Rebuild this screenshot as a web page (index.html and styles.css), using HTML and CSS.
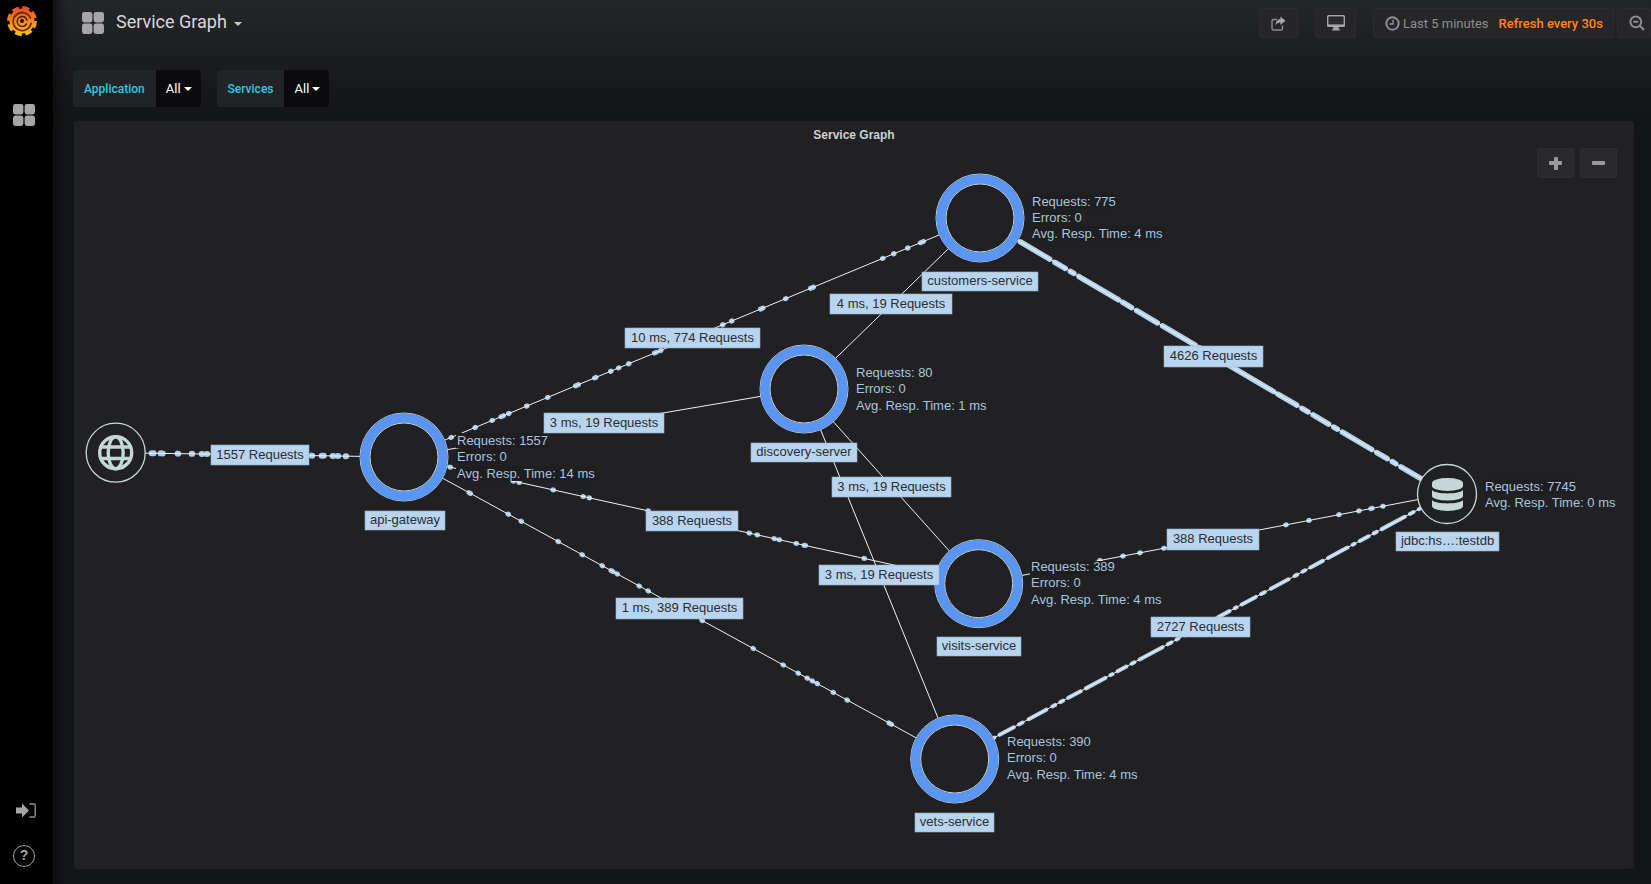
FILE: index.html
```html
<!DOCTYPE html>
<html lang="en">
<head>
<meta charset="utf-8">
<title>Service Graph</title>
<link rel="stylesheet" href="styles.css">
</head>
<body>
<div class="app">
  <nav class="sidebar">
    <svg class="logo" viewBox="0 0 32 34" width="32" height="34">
      <defs>
        <linearGradient id="flame" x1="0" y1="0" x2="0" y2="1">
          <stop offset="0" stop-color="#ef4d2a"/>
          <stop offset="1" stop-color="#fcc20e"/>
        </linearGradient>
      </defs>
      <circle cx="16" cy="17" r="12.500" fill="url(#flame)"/>
      <circle cx="16" cy="17" r="13.500" fill="none" stroke="url(#flame)" stroke-width="3" stroke-dasharray="7 3.600"/>
      <path class="logo-cut" d="M24.500 14A9 9 0 1 0 25 19.500"/>
      <path class="logo-inner" d="M21 16A5 5 0 1 0 20.500 20"/>
      <circle cx="16" cy="17" r="2" fill="#1a0e05"/>
    </svg>
    <svg class="side-grid" viewBox="0 0 22 22" width="22" height="22">
      <rect class="ico-fill" x="0" y="0" width="10.400" height="10.400" rx="2.400"/>
      <rect class="ico-fill" x="11.600" y="0" width="10.400" height="10.400" rx="2.400"/>
      <rect class="ico-fill" x="0" y="11.600" width="10.400" height="10.400" rx="2.400"/>
      <rect class="ico-fill" x="11.600" y="11.600" width="10.400" height="10.400" rx="2.400"/>
    </svg>
    <div class="side-spacer"></div>
    <svg class="side-signin" viewBox="0 0 20 15" width="20" height="15">
      <path class="ico-fill" d="M0 4.500h6V0.500l7 7-7 7v-4H0z"/>
      <path class="ico-line" d="M13.500 1H18a1.200 1.200 0 0 1 1.200 1.200v10.600A1.200 1.200 0 0 1 18 14h-4.500"/>
    </svg>
    <div class="side-help">?</div>
  </nav>

  <main class="main">
    <header class="topbar">
      <svg class="title-grid" viewBox="0 0 22 22" width="22" height="22">
        <rect class="ico-fill" x="0" y="0" width="10.400" height="10.400" rx="2.400"/>
        <rect class="ico-fill" x="11.600" y="0" width="10.400" height="10.400" rx="2.400"/>
        <rect class="ico-fill" x="0" y="11.600" width="10.400" height="10.400" rx="2.400"/>
        <rect class="ico-fill" x="11.600" y="11.600" width="10.400" height="10.400" rx="2.400"/>
      </svg>
      <h1 class="title">Service Graph</h1>
      <span class="title-caret"></span>
      <div class="top-actions">
        <button class="tbtn share">
          <svg viewBox="0 0 15 15" width="15" height="15">
            <path class="ico-line" d="M11.500 9.500v3a1.500 1.500 0 0 1-1.500 1.500H2.500A1.500 1.500 0 0 1 1 12.500V5a1.500 1.500 0 0 1 1.500-1.500H6"/>
            <path class="ico-fill" d="M9.500 0.500l5 4.300-5 4.300V6.500C7 6.500 5.500 7.300 4.800 9.500 4.600 5.800 6.500 3.300 9.500 3.100z"/>
          </svg>
        </button>
        <button class="tbtn monitor">
          <svg viewBox="0 0 18 16" width="18" height="16">
            <rect class="ico-fill" x="0" y="0" width="18" height="12" rx="1.500"/>
            <rect class="mon-screen" x="1.400" y="1.400" width="15.200" height="8"/>
            <path class="ico-fill" d="M6.500 12h5l.6 2.400h1v1.200H4.900v-1.200h1z"/>
          </svg>
        </button>
        <button class="tbtn timepick">
          <svg viewBox="0 0 15 15" width="15" height="15">
            <circle class="ico-line heavy" cx="7.500" cy="7.500" r="6.200"/>
            <path class="ico-line" d="M8 3.500v4.500H4.500"/>
          </svg>
          <span class="time-text">Last 5 minutes</span>
          <span class="refresh-text">Refresh every 30s</span>
        </button>
        <button class="tbtn zoomout">
          <svg viewBox="0 0 16 16" width="16" height="16">
            <circle class="ico-line heavy" cx="6.800" cy="6.800" r="5.400"/>
            <path class="ico-line heavy" d="M4.300 6.800h5M10.800 10.800l4.200 4.200"/>
          </svg>
        </button>
      </div>
    </header>

    <section class="vars">
      <div class="var">
        <span class="var-label">Application</span>
        <span class="var-value">All<i class="var-caret"></i></span>
      </div>
      <div class="var">
        <span class="var-label">Services</span>
        <span class="var-value">All<i class="var-caret"></i></span>
      </div>
    </section>

    <section class="panel">
      <h2 class="panel-title">Service Graph</h2>
      <div class="zoom-btns">
        <button class="zbtn"><span class="glyph-plus"></span></button>
        <button class="zbtn"><span class="glyph-minus"></span></button>
      </div>
      <svg class="graph" viewBox="74 149 1560 720" width="1560" height="720">
        <defs>
          <g id="ring">
            <circle class="ring-edge" r="44"/>
            <circle class="ring-blue" r="39"/>
            <circle class="ring-edge" r="34"/>
          </g>
        </defs>

        <!-- edges -->
        <line class="dots" x1="404" y1="457" x2="980" y2="218" pathLength="576" stroke-dasharray="0.500 46.500 0.500 23.500 0.500 16.500 0.500 8.500 2.500 5 0.500 17.500 0.500 20.500 0.500 27.500 3 16 1.500 14.500 0.500 7.500 0.500 9.500 0.500 25.500 2 4 0.500 61.500 0.500 8.500 0.500 28.500 2.500 22.500 0.500 24.500 3 69 0.500 10.500 0.500 13.500 0.500 12.500 3 900"/>
        <line class="dots" x1="404" y1="457" x2="978.700" y2="583.700" pathLength="574.700" stroke-dasharray="0.500 45.500 0.500 62.500 0.500 5.500 0.500 33.500 0.500 29.500 0.500 5.500 0.500 58.500 0.500 100.500 0.500 7.500 0.500 16.500 0.500 4.500 0.500 16.500 0.500 7.500 1.500 58.500 0.500 900"/>
        <line class="dots" x1="404" y1="457" x2="954.700" y2="759" pathLength="550.700" stroke-dasharray="1.500 37.500 0.500 12.500 0.500 36.500 0.500 23.500 0.500 19.500 0.500 8.500 2 4 0.500 21.500 0.500 8.500 0.500 16.500 0.500 36.500 0.500 50.500 0.500 29.500 0.500 14.500 0.500 8.500 0.500 4.500 0.500 4.500 0.500 15.500 0.500 13.500 0.500 41.500 2.500 900" stroke-dashoffset="-65"/>
        <line class="dots big" x1="115.700" y1="452.700" x2="404" y2="457" pathLength="288.300" stroke-dasharray="2 7 2 15 0.500 13.500 0.500 9.500 0.500 4.500 0.500 104.500 0.500 9.500 2 9 0.500 4.500 0.500 7.500 0.500 900" stroke-dashoffset="-36"/>
        <line class="dots" x1="978.700" y1="583.700" x2="1447" y2="494" pathLength="468.300" stroke-dasharray="0.500 22.500 0.500 16.500 0.500 23.500 0.500 85.500 0.500 35.500 0.500 22.500 0.500 29.500 0.500 19.500 0.500 11.500 1.500 10.500 0.500 900" stroke-dashoffset="-121"/>
        <line class="dots dense" x1="954.700" y1="759" x2="1447" y2="494" stroke-dasharray="6 7 3 7 14 6 2 6 16 6 4 7 20 7 3 6 3 6 14 6 22 6 2 6 10 6 3 6 26 6 4 6 2 7 8 6"/>
        <line class="dots thick" x1="980" y1="218" x2="1447" y2="494" stroke-dasharray="7 6 18 6 4 6 34 6 12 6 4 6 46 5 10 6 24 6 38 5 16 6 6 6 52 5 22 6"/>
        <line class="edge" x1="404" y1="457" x2="980" y2="218"/>
        <line class="edge" x1="404" y1="457" x2="804" y2="389"/>
        <line class="edge" x1="404" y1="457" x2="978.700" y2="583.700"/>
        <line class="edge" x1="404" y1="457" x2="954.700" y2="759"/>
        <line class="edge" x1="115.700" y1="452.700" x2="404" y2="457"/>
        <line class="edge" x1="980" y1="218" x2="804" y2="389"/>
        <line class="edge" x1="804" y1="389" x2="978.700" y2="583.700"/>
        <line class="edge" x1="804" y1="389" x2="954.700" y2="759"/>
        <line class="edge" x1="980" y1="218" x2="1447" y2="494"/>
        <line class="edge" x1="978.700" y1="583.700" x2="1447" y2="494"/>
        <line class="edge" x1="954.700" y1="759" x2="1447" y2="494"/>

        <!-- nodes -->
        <use href="#ring" x="404" y="457"/>
        <use href="#ring" x="980" y="218"/>
        <use href="#ring" x="804" y="389"/>
        <use href="#ring" x="978.700" y="583.700"/>
        <use href="#ring" x="954.700" y="759"/>

        <circle class="ext-node" cx="115.700" cy="452.700" r="29.500"/>
        <g class="globe">
          <circle cx="115.700" cy="452.700" r="16"/>
          <ellipse cx="115.700" cy="452.700" rx="7.500" ry="16"/>
          <path d="M100 447h31.400M100 458.500h31.400"/>
        </g>

        <circle class="ext-node" cx="1447" cy="494" r="29.500"/>
        <g class="db">
          <path d="M1432 483a15.500 5 0 0 1 31 0v3a15.500 5 0 0 1-31 0z"/>
          <path d="M1432 490c3 4.500 28 4.500 31 0v6a15.500 4.500 0 0 1-31 0z"/>
          <path d="M1432 500c3 4.500 28 4.500 31 0v6a15.500 5 0 0 1-31 0z"/>
        </g>

        <!-- stats -->
        <g class="stat-bgs">
          <rect x="456" y="433" width="92" height="15"/>
          <rect x="456" y="449" width="50" height="15"/>
          <rect x="456" y="466" width="140" height="15"/>
          <rect x="1031" y="194" width="84" height="15"/>
          <rect x="1031" y="210" width="50" height="15"/>
          <rect x="1031" y="226" width="133" height="15"/>
          <rect x="1030" y="561" width="84" height="14"/>
          <rect x="1006" y="734" width="84" height="15"/>
          <rect x="1484" y="479" width="91" height="15"/>
        </g>
        <g class="stats">
          <text x="457" y="445">Requests: 1557</text>
          <text x="457" y="461">Errors: 0</text>
          <text x="457" y="478">Avg. Resp. Time: 14 ms</text>
          <text x="1032" y="206">Requests: 775</text>
          <text x="1032" y="222">Errors: 0</text>
          <text x="1032" y="238">Avg. Resp. Time: 4 ms</text>
          <text x="856" y="377">Requests: 80</text>
          <text x="856" y="393">Errors: 0</text>
          <text x="856" y="410">Avg. Resp. Time: 1 ms</text>
          <text x="1031" y="571">Requests: 389</text>
          <text x="1031" y="587">Errors: 0</text>
          <text x="1031" y="604">Avg. Resp. Time: 4 ms</text>
          <text x="1007" y="746">Requests: 390</text>
          <text x="1007" y="762">Errors: 0</text>
          <text x="1007" y="779">Avg. Resp. Time: 4 ms</text>
          <text x="1485" y="491">Requests: 7745</text>
          <text x="1485" y="507">Avg. Resp. Time: 0 ms</text>
        </g>

        <!-- labels -->
        <g class="tags">
          <rect x="211" y="445" width="98" height="20"/><text x="260" y="459">1557 Requests</text>
          <rect x="365" y="511" width="80" height="19"/><text x="405" y="524">api-gateway</text>
          <rect x="1396" y="532" width="103" height="19"/><text x="1447.500" y="545">jdbc:hs…:testdb</text>
          <rect x="922" y="272" width="116" height="19"/><text x="980" y="285">customers-service</text>
          <rect x="751" y="443" width="106" height="19"/><text x="804" y="456">discovery-server</text>
          <rect x="832" y="477" width="119" height="20"/><text x="891.500" y="491">3 ms, 19 Requests</text>
          <rect x="819" y="565" width="120" height="20"/><text x="879" y="579">3 ms, 19 Requests</text>
          <rect x="937" y="637" width="84" height="19"/><text x="979" y="650">visits-service</text>
          <rect x="915" y="813" width="79" height="19"/><text x="954.500" y="826">vets-service</text>
          <rect x="1164" y="346" width="99" height="21"/><text x="1213.500" y="360">4626 Requests</text>
          <rect x="625" y="328" width="135" height="20"/><text x="692.500" y="342">10 ms, 774 Requests</text>
          <rect x="544" y="413" width="120" height="20"/><text x="604" y="427">3 ms, 19 Requests</text>
          <rect x="830" y="294" width="122" height="20"/><text x="891" y="308">4 ms, 19 Requests</text>
          <rect x="646" y="511" width="92" height="20"/><text x="692" y="525">388 Requests</text>
          <rect x="616" y="598" width="127" height="21"/><text x="679.500" y="612">1 ms, 389 Requests</text>
          <rect x="1167" y="529" width="92" height="21"/><text x="1213" y="543">388 Requests</text>
          <rect x="1151" y="617" width="99" height="20"/><text x="1200.500" y="631">2727 Requests</text>
        </g>
      </svg>
    </section>
  </main>
</div>
</body>
</html>
```
FILE: styles.css
```css
* { box-sizing: border-box; }
html, body { margin: 0; height: 100%; }
body {
  background: #141517;
  color: #d8d9da;
  font-family: Roboto, "Liberation Sans", sans-serif;
  overflow: hidden;
}
.app { display: flex; width: 1651px; height: 884px; overflow: hidden; }

/* sidebar */
.sidebar {
  width: 53px;
  flex: none;
  background: #000;
  display: flex;
  flex-direction: column;
  align-items: center;
  padding-top: 4px;
}
.logo { margin-left: -9px; }
.logo-cut { fill: none; stroke: #6b2a0c; stroke-width: 1.800; stroke-linecap: round; }
.logo-inner { fill: none; stroke: #4a1c08; stroke-width: 1.500; stroke-linecap: round; }
.side-grid { margin: 66px 0 0 -5px; }
.side-spacer { flex: 1; }
.side-signin { margin-bottom: 27px; margin-left: -1px; }
.side-help {
  width: 22px;
  height: 22px;
  border: 1.500px solid #a0a0a0;
  border-radius: 50%;
  color: #a0a0a0;
  font: 700 14px/19px "Liberation Sans", sans-serif;
  text-align: center;
  margin: 0 0 17px -5px;
}
.ico-fill { fill: #a6a6a8; }
.ico-line { fill: none; stroke: #8e8e90; stroke-width: 1.400; }
.ico-line.heavy { stroke-width: 2; }
.mon-screen { fill: #2a2a2d; }

/* main */
.main {
  flex: 1;
  min-width: 0;
  background: linear-gradient(to bottom, #25262a 0, #17181a 90px, #141517 130px);
  box-shadow: inset 14px 0 14px -10px #0d0d0e;
}
.topbar {
  height: 70px;
  display: flex;
  align-items: flex-start;
  padding: 12px 0 0 29px;
}
.title {
  margin: -2px 0 0 12px;
  font: 400 18px/23px Roboto, sans-serif;
  color: #d8d9da;
}
.title-caret {
  margin: 10px 0 0 7px;
  border-left: 4px solid transparent;
  border-right: 4px solid transparent;
  border-top: 4px solid #c8c8c8;
}
.top-actions {
  margin: -4px 0 0 auto;
  display: flex;
  flex: none;
  width: 392px;
}
.tbtn {
  height: 30px;
  padding: 0;
  border: 1px solid #2c2c30;
  border-radius: 2px;
  background: #262629;
  display: flex;
  align-items: center;
  justify-content: center;
  color: #8e8e8e;
  font: 13px Roboto, sans-serif;
  flex: none;
}
.share { width: 39px; margin-right: 17px; }
.monitor { width: 41px; margin-right: 17px; }
.timepick { width: 241px; margin-right: 3px; justify-content: flex-start; padding-left: 11px; }
.zoomout { width: 34px; justify-content: flex-start; padding-left: 11px; }
.time-text { margin-left: 3px; color: #8e8e8e; }
.refresh-text { margin-left: 10px; color: #ff851b; font-weight: 500; }

/* variables */
.vars {
  display: flex;
  gap: 16px;
  padding-left: 20px;
  height: 37px;
}
.var {
  display: flex;
  height: 37px;
  border-radius: 3px;
  overflow: hidden;
  background: #212327;
}
.var-label {
  display: flex;
  align-items: center;
  padding: 0 11px;
  font-size: 12px;
  font-weight: 500;
  color: #2ec9e0;
}
.var-value {
  display: flex;
  align-items: center;
  padding: 0 9px 0 10px;
  background: #0b0b0d;
  color: #fff;
  font-size: 13px;
}
.var-caret {
  margin-left: 3px;
  border-left: 4px solid transparent;
  border-right: 4px solid transparent;
  border-top: 4px solid #fff;
}

/* panel */
.panel {
  position: relative;
  width: 1560px;
  height: 748px;
  margin: 14px 0 0 21px;
  background: #212124;
  border-radius: 3px;
  overflow: hidden;
}
.panel-title {
  margin: 0;
  height: 28px;
  text-align: center;
  font: 700 12px/28px "Liberation Sans", sans-serif;
  color: #d0d1d2;
}
.zoom-btns {
  position: absolute;
  top: 27px;
  right: 17px;
  display: flex;
  gap: 6px;
}
.zbtn {
  width: 37px;
  height: 30px;
  padding: 0;
  border: 1px solid #2e2e32;
  border-radius: 2px;
  background: #2a2a2d;
  display: flex;
  align-items: center;
  justify-content: center;
}
.glyph-plus, .glyph-minus {
  display: block;
  width: 13px;
  height: 4px;
  background: #9a9a9c;
  border-radius: 1px;
  position: relative;
}
.glyph-plus::after {
  content: "";
  position: absolute;
  left: 4.500px;
  top: -4.500px;
  width: 4px;
  height: 13px;
  background: #9a9a9c;
  border-radius: 1px;
}

/* graph */
.graph { display: block; }
.edge { stroke: #eef2f4; stroke-width: 1; }
.dots { stroke: #aecae4; stroke-width: 5; stroke-linecap: round; fill: none; }
.dots.big { stroke-width: 6; }
.dots.dense { stroke: #b6d2ec; stroke-width: 4; }
.dots.thick { stroke: #b6d3ef; stroke-width: 5.500; }
.ring-edge { fill: #212124; stroke: #c6d3db; stroke-width: 1; }
.ring-blue { fill: none; stroke: #5a95f2; stroke-width: 9.500; }
.ext-node { fill: #212124; stroke: #c8dad8; stroke-width: 1.300; }
.globe { fill: none; stroke: #c5d8d8; stroke-width: 3.400; }
.db { fill: #c5d8d8; }
.stat-bgs { fill: #1e1e21; }
.stats text {
  font: 13px "Liberation Sans", sans-serif;
  fill: #a9c5df;
}
.tags rect { fill: #b9d4ee; stroke: #94aec8; stroke-width: 0.600; }
.tags text {
  font: 13px "Liberation Sans", sans-serif;
  fill: #2a2d33;
  text-anchor: middle;
}
```
